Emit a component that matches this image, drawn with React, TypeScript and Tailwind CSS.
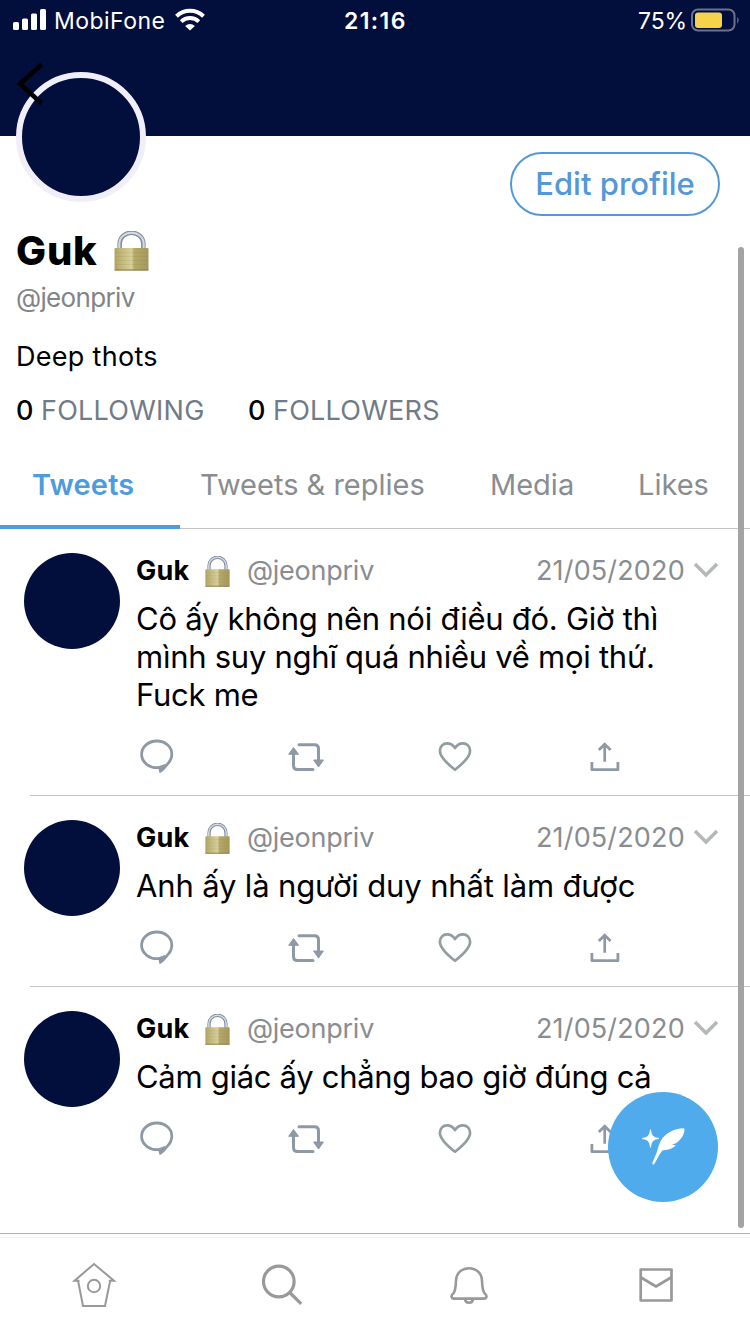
import React from "react";

const NAVY = "bg-[#020f3d]";

type Tweet = { lines: string[] };

const tweets: Tweet[] = [
  {
    lines: [
      "Cô ấy không nên nói điều đó. Giờ thì",
      "mình suy nghĩ quá nhiều về mọi thứ.",
      "Fuck me",
    ],
  },
  { lines: ["Anh ấy là người duy nhất làm được"] },
  { lines: ["Cảm giác ấy chẳng bao giờ đúng cả"] },
];

const lineTracking = [
  ["tracking-[-0.26px]", "tracking-[-0.26px]", "tracking-[-0.26px]"],
  ["tracking-[-0.15px]"],
  ["tracking-[-0.3px]"],
];

function Lock({ className, id }: { className: string; id: string }) {
  return (
    <svg viewBox="0 0 34 40" preserveAspectRatio="none" className={className}>
      <defs>
        <linearGradient id={id} x1="0" x2="1" y1="0" y2="0">
          <stop offset="0" stopColor="#b0a566" />
          <stop offset="0.25" stopColor="#c6bc80" />
          <stop offset="0.5" stopColor="#d6cf9c" />
          <stop offset="0.58" stopColor="#b5aa6a" />
          <stop offset="1" stopColor="#a4985a" />
        </linearGradient>
      </defs>
      <path d="M5.5 20V12.5a11.5 10.8 0 0 1 23 0V20" fill="none" stroke="#858e9c" strokeWidth="4.4" />
      <path d="M5.2 20V12.5a11.8 10.8 0 0 1 23.6 0V20" fill="none" stroke="#d3dae4" strokeWidth="2" />
      <rect x="0.5" y="17" width="33" height="22.5" rx="1" fill={`url(#${id})`} />
      <path d="M1 21.5h32M1 25.5h32M1 29.5h32M1 33.5h32" stroke="#8a7d3c" strokeOpacity="0.15" strokeWidth="1" />
      <path d="M0.5 39h33" stroke="#857a45" strokeWidth="1.2" />
    </svg>
  );
}

function ReplyIcon() {
  return (
    <svg width="40" height="40" viewBox="136 737 40 40" fill="none">
      <path
        d="M160 767.400C150 769 141.600 762.500 141.600 754.300c0-7.400 6.800-13.300 15.200-13.300s15 5.700 15 13.300c0 4.200-1.800 7.600-5.300 10.700"
        stroke="#8f99a5"
        strokeWidth="2.800"
      />
      <path d="M158.600 766.300l6.300-2.300 3.300 1.100c-2 3.300-4.700 6-8.500 8.200-.9-2.200-1.200-4.400-1.100-7z" fill="#8f99a5" />
    </svg>
  );
}

function RetweetIcon() {
  return (
    <svg width="40" height="40" viewBox="286 737 40 40" fill="none">
      <path d="M299 744.700h15.500q4 0 4 4V762M313 769.500h-15.500q-4 0-4-4V753" stroke="#8f99a5" strokeWidth="3" strokeLinecap="round" />
      <path d="M293.500 747.500l-4.800 6.800h9.800zM318.500 767l-4.900-7h9.800z" fill="#8f99a5" stroke="#8f99a5" strokeWidth="1" strokeLinejoin="round" />
    </svg>
  );
}

function HeartIcon() {
  return (
    <svg width="40" height="40" viewBox="435 737 40 40" fill="none">
      <path
        d="M455 769.800C448 764.300 439.900 757.500 439.900 750.700c0-4.400 3.300-7.300 7.100-7.300 3.400 0 6 1.600 8 4.700 2-3.100 4.600-4.700 8-4.700 3.800 0 7.100 2.900 7.100 7.300 0 6.800-8.100 13.600-15.100 19.100z"
        stroke="#929d9f"
        strokeWidth="2.700"
        strokeLinejoin="round"
      />
    </svg>
  );
}

function ShareIcon() {
  return (
    <svg width="40" height="40" viewBox="585.5 737 40 40" fill="none">
      <path d="M592.400 762v7.700h26V762" stroke="#8f99a5" strokeWidth="2.800" strokeLinejoin="round" />
      <path d="M605.200 761.800V744.500M599.300 750l5.900-5.800 5.900 5.800" stroke="#8f99a5" strokeWidth="2.700" />
    </svg>
  );
}

function StatusBar() {
  return (
    <div className="flex h-[41px] items-center pl-[13px] pr-[11px] text-[23px] leading-[41px] text-white">
      <svg width="34" height="22" viewBox="0 0 34 22" fill="white" className="-mt-0.5 shrink-0">
        <rect x="0" y="13" width="6" height="8" rx="1.500" />
        <rect x="9" y="9.500" width="6" height="11.500" rx="1.500" />
        <rect x="18" y="4.500" width="6" height="16.500" rx="1.500" />
        <rect x="27" y="0" width="6" height="21" rx="1.500" />
      </svg>
      <span className="ml-[7px] w-[121px] whitespace-nowrap pt-px tracking-[0.45px]">MobiFone</span>
      <svg width="30" height="23" viewBox="0 0 30 23" fill="none" stroke="white" className="-mt-0.5 shrink-0">
        <path d="M1.500 8.300a19.500 19.500 0 0 1 27 0" strokeWidth="4" />
        <path d="M6.200 13.600a12.600 12.600 0 0 1 17.600 0" strokeWidth="3.800" />
        <path d="M10.200 18a7 7 0 0 1 9.600 0L15 22.600z" fill="white" stroke="none" />
      </svg>
      <span className="ml-[139px] w-[294px] whitespace-nowrap pt-px font-semibold tracking-[1.4px]">21:16</span>
      <span className="w-[53px] whitespace-nowrap pt-px tracking-[-0.1px]">75%</span>
      <svg width="50" height="24" viewBox="0 0 50 24" fill="none" className="-mr-[2px] -mt-0.5 shrink-0">
        <rect x="1" y="1.500" width="42.500" height="21" rx="6" stroke="#6d728b" strokeWidth="2" />
        <rect x="4" y="4.500" width="27" height="15.500" rx="3" fill="#f6d34a" />
        <path d="M46.300 9q2.600 3 0 7z" fill="#7b8097" />
      </svg>
    </div>
  );
}

function TweetRow({ tweet, index, last }: { tweet: Tweet; index: number; last: boolean }) {
  return (
    <article>
      <div className="flex pl-6 pt-6">
        <div className={`size-24 shrink-0 rounded-full ${NAVY}`} />
        <div className="ml-4 w-[600px]">
          <div className="flex h-9 items-center whitespace-nowrap text-[27px] leading-9 text-[#8a8d90]">
            <span className="w-[69px] font-bold tracking-[0.2px] text-black">Guk</span>
            <Lock id={`lock-${index}`} className="h-[31px] w-[25px]" />
            <span className="ml-[17px] w-[289px] tracking-[-0.25px]">@jeonpriv</span>
            <span className="w-[157px] tracking-[0.15px]">21/05/2020</span>
            <svg width="26" height="16" viewBox="0 0 26 16" fill="none" className="-mt-0.5">
              <path d="M2 2l11 11L24 2" stroke="#b5b8ba" strokeWidth="3.500" />
            </svg>
          </div>
          <div className="mt-[11px] text-[31px] leading-[38px] text-black">
            {tweet.lines.map((line, i) => (
              <p key={line} className={`whitespace-nowrap ${lineTracking[index][i]}`}>
                {line}
              </p>
            ))}
          </div>
          <div className="mt-[23px] grid grid-cols-[150px_149px_150px_40px]">
            <ReplyIcon />
            <RetweetIcon />
            <HeartIcon />
            <ShareIcon />
          </div>
        </div>
      </div>
      <div className={`ml-[30px] mt-[18px] h-px ${last ? "bg-transparent" : "bg-[#c3c5c7]"}`} />
    </article>
  );
}

export default function App() {
  return (
    <div className="relative flex h-[1334px] w-[750px] flex-col overflow-hidden bg-white font-['Inter','Liberation_Sans',sans-serif] text-black">
      <header className={`h-[136px] shrink-0 ${NAVY}`}>
        <StatusBar />
      </header>

      <section className="h-[308px] shrink-0 pl-4">
        <div className="flex h-20 justify-between pr-[30px] pt-4">
          <div className={`-mt-20 size-[130px] shrink-0 rounded-full border-[6px] border-[#f0eef8] ${NAVY}`} />
          <button className="h-16 w-[210px] whitespace-nowrap rounded-full border-2 border-[#5398d8] text-[31px] font-medium leading-[60px] text-[#5398d8]">
            Edit profile
          </button>
        </div>
        <div className="mt-3.5 flex h-[42px] items-center">
          <h1 className="w-[98px] whitespace-nowrap text-[40px] font-extrabold leading-[42px] tracking-[0.8px]">Guk</h1>
          <Lock id="lock-profile" className="h-10 w-[35px]" />
        </div>
        <p className="mt-3 text-[26px] leading-[28px] tracking-[-0.65px] text-[#828486]">@jeonpriv</p>
        <p className="mt-[29px] text-[27px] leading-[31px] tracking-[0.3px]">Deep thots</p>
        <div className="mt-[23px] flex whitespace-nowrap text-[27px] leading-8 tracking-[0.25px] text-[#717b87]">
          <span className="w-[25px] font-medium text-black">0</span>
          <span className="w-[207px]">FOLLOWING</span>
          <span className="w-[25px] font-medium text-black">0</span>
          <span>FOLLOWERS</span>
        </div>
      </section>

      <nav className="flex h-[85px] shrink-0 whitespace-nowrap border-b border-[#c3c5c7] text-[29px] leading-[82px] text-[#8a8d90]">
        <div className="-mb-px w-[180px] border-b-4 border-[#4e9bdd] pl-8 font-semibold tracking-[0.15px] text-[#4e9bdd]">Tweets</div>
        <div className="ml-5 w-[290px]">Tweets &amp; replies</div>
        <div className="w-[148px]">Media</div>
        <div>Likes</div>
      </nav>

      <main className="min-h-0 flex-1 overflow-hidden">
        {tweets.map((t, i) => (
          <TweetRow key={i} tweet={t} index={i} last={i === tweets.length - 1} />
        ))}
      </main>

      <footer className="h-[101px] shrink-0 border-t border-[#b1b1b1]">
        <div className="mt-[3px] flex h-[95px] items-center justify-around border-t border-[#f3f3f3]">
          <svg width="48" height="48" viewBox="70 1261 48 48" fill="none" stroke="#999" strokeWidth="2" className="shrink-0">
            <path d="M79.500 1280.700h-5L94 1264l20 16.700h-5.200" />
            <path d="M78 1280.500l5 25.500h22l5.200-25.500" />
            <circle cx="94" cy="1286" r="6.200" />
          </svg>
          <svg width="48" height="48" viewBox="257 1261 48 48" fill="none" stroke="#999" strokeWidth="3.200" className="shrink-0">
            <circle cx="278.800" cy="1281.500" r="15.300" />
            <path d="M289.700 1292.500l11.500 11.300" />
          </svg>
          <svg width="48" height="48" viewBox="445 1261 48 48" fill="none" stroke="#999" strokeWidth="2.600" className="shrink-0">
            <path d="M469 1268.200c-7.500 0-12.700 5-13 12.500-.3 6.800-.4 10-2.500 12.500-3.300 2.300-2 5.400.5 5.400h30c2.500 0 3.800-3.100.5-5.400-2.100-2.500-2.200-5.700-2.500-12.500-.3-7.500-5.500-12.500-13-12.500z" />
            <path d="M465 1299c.5 5 7.500 5 8 0" />
          </svg>
          <svg width="48" height="48" viewBox="632 1261 48 48" fill="none" stroke="#999" strokeWidth="2.700" strokeLinejoin="round" className="shrink-0">
            <path d="M640.700 1269.500h30.800v31h-30.800zM641 1277.500l15 9 15-9" />
          </svg>
        </div>
      </footer>

      <svg width="30" height="44" viewBox="14 62 30 44" fill="none" className="absolute left-3.5 top-[62px]">
        <path d="M40 66L20 83.700 40 102" stroke="black" strokeWidth="4.500" strokeLinecap="square" />
      </svg>

      <button className="absolute left-[608px] top-[1092px] size-[110px] rounded-full bg-[#50abed]" aria-label="Compose">
        <svg width="110" height="110" viewBox="608 1092 110 110" fill="white">
          <path d="M650.500 1129.500c1.200 6.300 2.200 7.700 8.500 9-6.300 1.300-7.300 2.700-8.500 9-1.200-6.300-2.200-7.700-8.500-9 6.300-1.300 7.300-2.700 8.500-9z" stroke="white" strokeWidth="0.600" />
          <path d="M683.500 1128.300c-7-.1-16.500 3.700-21.300 10.200-3.400 4.800-3.900 9.300-5.500 14-1.300 3.900-3.400 7.200-4.300 10.400-.3 1.600 1 2.100 2 .8 2.600-3.900 4.600-9.300 7.900-13.200 2-.5 4.500-.5 7-1.200 2.900-.8 5-2.200 6.500-4.200-1.500.2-3 0-3.800-.4 5.700-1.300 11-6.700 12.400-13.700.2-1.500.1-2.700-.9-2.700z" />
        </svg>
      </button>

      <div className="absolute left-[738px] top-[247px] h-[981px] w-1.5 rounded-full bg-[#a3a3a3]" />
    </div>
  );
}
